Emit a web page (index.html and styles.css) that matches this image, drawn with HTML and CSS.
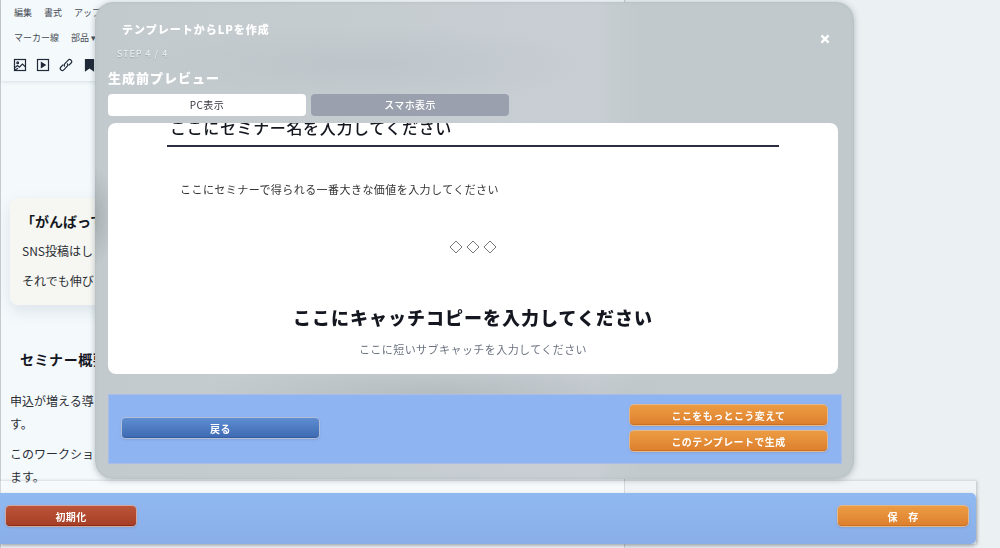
FILE: index.html
```html
<!DOCTYPE html>
<html lang="ja">
<head>
  <meta charset="UTF-8" />
  <meta name="viewport" content="width=device-width, initial-scale=1.0" />
  <title>テンプレートからLPを作成</title>
  <link rel="stylesheet" href="styles.css">
</head>
<body>

  <main class="editor">
    <div class="toolbar">
      <div class="menu">
        <a href="#">編集</a>
        <a href="#">書式</a>
        <a href="#">アップ</a>
      </div>
      <div class="menu menu-sub">
        <a href="#">マーカー線</a>
        <a href="#">部品 ▾</a>
      </div>
      <div class="tools">
        <button type="button" aria-label="画像">
          <svg viewBox="0 0 14 14"><rect x="1.5" y="1.5" width="11" height="11"/><circle cx="4.7" cy="4.8" r="0.9"/><path d="M2 9.6l2.4-2 2 1.6 3-3.2 3 2.8M2 12l3-1.8"/></svg>
        </button>
        <button type="button" aria-label="動画">
          <svg viewBox="0 0 14 14"><rect x="1.5" y="1.5" width="11" height="11"/><path class="solid" d="M5.4 4.6v4.8L9.2 7z"/></svg>
        </button>
        <button type="button" aria-label="リンク">
          <svg viewBox="0 0 14 14"><path d="M5.9 8.5a2 2 0 0 1 0-2.8l3.300-3.500a2 2 0 0 1 2.900 2.800L9.800 7.400M8.100 5.500a2 2 0 0 1 0 2.800l-3.300 3.500a2 2 0 0 1-2.900-2.800l2.300-2.400"/></svg>
        </button>
        <button type="button" aria-label="しおり">
          <svg viewBox="0 0 14 14"><path class="solid" d="M3.500 1.500h8v11L7.500 9.800l-4 2.700z"/></svg>
        </button>
      </div>
    </div>

    <section class="note">
      <h2>「がんばって</h2>
      <p>SNS投稿はし</p>
      <p>それでも伸び</p>
    </section>

    <section class="outline">
      <h2>セミナー概要</h2>
      <p>申込が増える導<br>す。</p>
      <p>このワークショ<br>ます。</p>
    </section>
  </main>

  <div class="savebar-wrap">
    <div class="savebar">
      <button type="button" class="btn red">初期化</button>
      <button type="button" class="btn orange">保　存</button>
    </div>
  </div>

  <div class="modal" role="dialog" aria-labelledby="modal-title">
    <div class="modal-head">
      <h1 id="modal-title">テンプレートからLPを作成</h1>
      <button type="button" class="close" aria-label="閉じる">
        <svg viewBox="0 0 10 10"><path d="M2 2l6 6M8 2L2 8"/></svg>
      </button>
    </div>
    <p class="step">STEP 4 / 4</p>
    <h2 class="modal-sub">生成前プレビュー</h2>

    <div class="tabs">
      <button type="button" class="tab active">PC表示</button>
      <button type="button" class="tab">スマホ表示</button>
    </div>

    <div class="preview">
      <h3 class="seminar">ここにセミナー名を入力してください</h3>
      <p class="value">ここにセミナーで得られる一番大きな価値を入力してください</p>
      <div class="divider">
        <svg viewBox="0 0 48 14"><path d="M7 1L13 7 7 13 1 7zM24 1L30 7 24 13 18 7zM41 1L47 7 41 13 35 7z"/></svg>
      </div>
      <h3 class="catch">ここにキャッチコピーを入力してください</h3>
      <p class="subcatch">ここに短いサブキャッチを入力してください</p>
    </div>

    <div class="modal-foot">
      <button type="button" class="btn blue">戻る</button>
      <div class="stack">
        <button type="button" class="btn orange">ここをもっとこう変えて</button>
        <button type="button" class="btn orange">このテンプレートで生成</button>
      </div>
    </div>
  </div>

</body>
</html>
```

FILE: styles.css
```css
:root {
  --ink: #14171f;
  --bar: #8fb4f2;
  --font: "Noto Sans CJK JP", sans-serif;
}

* {
  margin: 0;
  padding: 0;
  box-sizing: border-box;
  letter-spacing: 0.04em;
}

body {
  min-height: 100vh;
  background: #ebf0f3;
  color: var(--ink);
  font-family: var(--font);
  overflow: hidden;
}

button {
  border: none;
  background: none;
  font-family: inherit;
  cursor: pointer;
}

a {
  color: inherit;
  text-decoration: none;
}

/* editor behind the dialog */
.editor {
  width: 62.5%;
  min-height: 100vh;
  background: #f4f9fc;
  border-left: 1px solid #c5cbd0;
  border-right: 1px solid #c9cfd3;
}

.toolbar {
  height: 81px;
  padding: 4px 13px 0;
  box-shadow: 0 1px 4px rgba(60, 80, 100, 0.16);
}

.menu {
  display: flex;
  gap: 12px;
  font-size: 9px;
  line-height: 18px;
  color: #454b54;
}

.menu a {
  letter-spacing: 0;
}

.menu-sub {
  margin-top: 7px;
}

.tools {
  display: flex;
  gap: 9px;
  margin-top: 11px;
  margin-left: -1px;
}

.tools button,
.tools svg {
  display: block;
  width: 14px;
  height: 14px;
}

.tools svg {
  fill: none;
  stroke: #1f2937;
  stroke-width: 1.2;
}

.tools .solid {
  fill: #1f2937;
}

.note {
  margin: 117px 10px 0 9px;
  height: 107px;
  padding: 12px;
  border-radius: 8px;
  background: #f6f7f3;
  box-shadow: 0 6px 16px rgba(80, 100, 120, 0.14);
}

.note h2,
.outline h2 {
  font-size: 14px;
  line-height: 22px;
}

.note h2 {
  padding-left: 6px;
  letter-spacing: 0;
  font-feature-settings: "halt";
}

.note p,
.outline p {
  font-size: 12px;
  line-height: 23px;
  letter-spacing: 0;
  color: #2b2e34;
}

.note p {
  margin-top: 7px;
}

.outline {
  padding: 43px 9px 0;
}

.outline h2 {
  padding-left: 10px;
  margin-bottom: 19px;
}

.outline p + p {
  margin-top: 7px;
}

/* shared buttons */
.btn {
  height: 20px;
  border-radius: 4px;
  font-size: 10px;
  font-weight: 700;
  line-height: 19px;
  color: #fff;
  box-shadow: 0 0 0 1px #b3bfd8, 0 1px 3px rgba(80, 90, 120, 0.35), inset 0 -1px 0 rgba(0, 0, 0, 0.12);
}

.blue {
  background: linear-gradient(#5e8dd0, #3d69b2);
}

.orange {
  background: linear-gradient(#ec9c43, #dd7f2e);
  box-shadow: 0 0 0 1px #e3b88c, 0 1px 3px rgba(80, 90, 120, 0.35), inset 0 -1px 0 rgba(140, 60, 0, 0.2);
}

.red {
  background: linear-gradient(#bb5439, #a63e25);
  box-shadow: 0 0 0 1px #d2a79c, 0 1px 3px rgba(80, 90, 120, 0.35), inset 0 -1px 0 rgba(80, 0, 0, 0.3);
}

/* bottom bar */
.savebar-wrap {
  position: fixed;
  left: 0;
  right: 24px;
  bottom: 4px;
  padding-top: 12px;
  background: rgba(255, 255, 255, 0.25);
  box-shadow: 1px 0 3px rgba(70, 80, 90, 0.3);
}

.savebar {
  display: flex;
  justify-content: space-between;
  padding: 13px 8px 18px 6px;
  border-radius: 0 5px 5px 0;
  background: linear-gradient(#90b8f1, #8aafe8);
  box-shadow: 0 2px 4px rgba(70, 80, 90, 0.4);
}

.savebar .btn {
  width: 130px;
}

/* dialog */
.modal {
  position: fixed;
  top: 2px;
  left: 95px;
  right: 146px;
  padding: 18px 13px 15px;
  border-radius: 18px;
  background:
    radial-gradient(ellipse 20px 50px at 0 45%, rgba(150, 158, 163, 0.6), transparent),
    radial-gradient(ellipse 240px 30px at 45% 82%, rgba(165, 173, 176, 0.5), transparent),
    radial-gradient(ellipse 240px 40px at 35% 13%, rgba(176, 184, 190, 0.35), transparent),
    linear-gradient(90deg, #c3cacd 0%, #c8ced3 66%, #c1c9cc 72%, #c1c9cc 100%);
  box-shadow: 0 1px 6px rgba(70, 80, 90, 0.35), inset 0 0 3px rgba(140, 150, 155, 0.3);
}

.modal-head {
  display: flex;
  justify-content: space-between;
  height: 26px;
  padding: 0 10px 0 14px;
}

.modal-head h1 {
  font-size: 11px;
  font-weight: 900;
  line-height: 18px;
  letter-spacing: 1px;
  color: #fff;
}

.close {
  align-self: flex-end;
  width: 12px;
  height: 14px;
}

.close svg {
  display: block;
  width: 12px;
  height: 12px;
  fill: none;
  stroke: #fff;
  stroke-width: 2;
}

.step {
  padding-left: 9px;
  font-size: 9px;
  line-height: 16px;
  letter-spacing: 1px;
  color: #f0f3f5;
  text-shadow: 0 1px 1px rgba(90, 100, 110, 0.4);
}

.modal-sub {
  margin-top: 6px;
  font-size: 13px;
  font-weight: 900;
  line-height: 20px;
  letter-spacing: 1px;
  color: #fff;
}

.tabs {
  display: flex;
  gap: 5px;
  margin-top: 6px;
}

.tab {
  width: 198px;
  height: 22px;
  border-radius: 4px;
  background: #9aa0ae;
  font-size: 10px;
  font-weight: 500;
  line-height: 20px;
  color: #fff;
}

.tab.active {
  background: #fff;
  color: #33363d;
  font-weight: 400;
}

/* preview is scrolled down, its first heading is cut by the top edge */
.preview {
  display: flex;
  flex-direction: column;
  justify-content: flex-end;
  height: 251px;
  margin-top: 7px;
  margin-right: 3px;
  padding: 0 59px 15px;
  border-radius: 8px;
  background: #fff;
  overflow: hidden;
}

.seminar {
  padding: 0 3px 6px;
  border-bottom: 2px solid #2a2e40;
  font-size: 16px;
  font-weight: 500;
  line-height: 24px;
}

.value {
  margin-top: 32px;
  padding-left: 13px;
  font-size: 11px;
  line-height: 20px;
  color: #333;
}

.divider {
  margin-top: 41px;
  text-align: center;
}

.divider svg {
  display: block;
  width: 48px;
  height: 14px;
  margin: 0 auto;
  fill: none;
  stroke: #555;
  stroke-width: 0.8;
}

.catch {
  margin-top: 50px;
  font-size: 18px;
  font-weight: 900;
  line-height: 26px;
  letter-spacing: 1px;
  text-align: center;
}

.subcatch {
  margin-top: 9px;
  font-size: 11px;
  line-height: 20px;
  text-align: center;
  color: #6b7280;
}

.modal-foot {
  display: flex;
  justify-content: space-between;
  align-items: center;
  height: 70px;
  margin-top: 20px;
  margin-right: -1px;
  padding: 0 14px 2px 13px;
  border: 1px solid #a9bde6;
  background: var(--bar);
}

.modal-foot .btn {
  width: 197px;
}

.stack {
  display: flex;
  flex-direction: column;
  gap: 6px;
}
```
